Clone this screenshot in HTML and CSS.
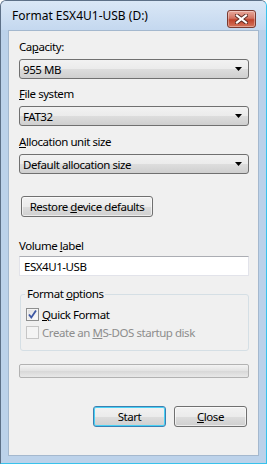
FILE: index.html
```html
<!DOCTYPE html>
<html lang="en">
<head>
    <meta charset="UTF-8">
    <title>Format ESX4U1-USB (D:)</title>
    <link rel="stylesheet" href="styles.css">
</head>
<body>
    <div class="window">
        <div class="titlebar">
            <span class="title">Format ESX4U1-USB (D:)</span>
            <div class="close-btn">
                <svg width="13" height="10" viewBox="0 0 13 10">
                    <path d="M2 1.5 L11 8.5 M11 1.5 L2 8.5" stroke="#5a2a22" stroke-width="4" stroke-linecap="square" />
                    <path d="M2 1.5 L11 8.5 M11 1.5 L2 8.5" stroke="#ffffff" stroke-width="2.2" stroke-linecap="square" />
                </svg>
            </div>
        </div>

        <div class="client">
            <div class="label">Ca<u>p</u>acity:</div>
            <div class="combo">
                <span>955 MB</span>
                <svg width="7" height="4" viewBox="0 0 7 4"><path d="M0 0 H7 L3.5 4 Z" fill="#000" /></svg>
            </div>

            <div class="label"><u>F</u>ile system</div>
            <div class="combo">
                <span>FAT32</span>
                <svg width="7" height="4" viewBox="0 0 7 4"><path d="M0 0 H7 L3.5 4 Z" fill="#000" /></svg>
            </div>

            <div class="label alloc"><u>A</u>llocation unit size</div>
            <div class="combo">
                <span>Default allocation size</span>
                <svg width="7" height="4" viewBox="0 0 7 4"><path d="M0 0 H7 L3.5 4 Z" fill="#000" /></svg>
            </div>

            <div class="btn restore"><span>Restore <u>d</u>evice defaults</span></div>

            <div class="label volume">Volume <u>l</u>abel</div>
            <div class="textbox">ESX4U1-USB</div>

            <div class="group">
                <span class="group-title">Format <u>o</u>ptions</span>
                <div class="check-row">
                    <span class="checkbox checked">
                        <svg width="11" height="11" viewBox="0 0 11 11">
                            <path d="M2 5.5 L4.3 8.5 L9 1.5" fill="none" stroke="#3d57a3" stroke-width="1.8" />
                        </svg>
                    </span>
                    <span><u>Q</u>uick Format</span>
                </div>
                <div class="check-row disabled">
                    <span class="checkbox"></span>
                    <span>Create an <u>M</u>S-DOS startup disk</span>
                </div>
            </div>

            <div class="progress"></div>

            <div class="actions">
                <div class="btn default"><span>Start</span></div>
                <div class="btn"><span><u>C</u>lose</span></div>
            </div>
        </div>
    </div>
</body>
</html>
```

FILE: styles.css
```css
* {
    box-sizing: border-box;
}

body {
    margin: 0;
    background: #ffffff;
    font-family: "Noto Sans", sans-serif;
    font-size: 11.5px;
    letter-spacing: -0.45px;
    color: #000;
}

u {
    text-decoration-thickness: 1px;
    text-underline-offset: 1px;
}

.window {
    width: 267px;
    height: 464px;
    background: #bcd2ea;
    border: 1px solid #5d7087;
    border-right-color: #38c2ec;
    border-bottom-color: #38c2ec;
    border-radius: 6px 6px 0 0;
    display: flex;
    flex-direction: column;
}

.titlebar {
    height: 29px;
    flex-shrink: 0;
    display: flex;
    justify-content: space-between;
    align-items: flex-start;
    padding-left: 11px;
    background: linear-gradient(#dae7f6, #c4d8ef);
    border-radius: 5px 5px 0 0;
}

.title {
    margin-top: 7px;
    font-size: 12px;
    line-height: 16px;
    letter-spacing: 0;
}

.close-btn {
    width: 29px;
    height: 18px;
    margin-top: 9px;
    margin-right: 10px;
    border: 1px solid #7a3a30;
    border-radius: 3px;
    background: linear-gradient(#e9a99c, #d27462 45%, #c0432c 55%, #d5745c);
    box-shadow: inset 0 0 0 1px rgba(255, 255, 255, 0.35);
    display: flex;
    align-items: center;
    justify-content: center;
}

.client {
    height: 426px;
    margin: 0 7px;
    background: #f0f0f0;
    border: 1px solid #a4b8ce;
    padding: 1px 9px 0 10px;
    display: flex;
    flex-direction: column;
}

.label {
    line-height: 15px;
    margin-top: 7px;
}

.label.alloc {
    margin-top: 8px;
}

.combo {
    height: 20px;
    margin-top: 5px;
    border: 1px solid #707070;
    border-radius: 3px;
    background: linear-gradient(#f2f2f2, #ebebeb 50%, #dddddd 51%, #cfcfcf);
    display: flex;
    align-items: center;
    justify-content: space-between;
    padding: 0 6px 0 3px;
}

.btn {
    height: 21px;
    border: 1px solid #707070;
    border-radius: 3px;
    background: linear-gradient(#f2f2f2, #ebebeb 50%, #dddddd 51%, #cfcfcf);
    box-shadow: inset 0 0 0 1px rgba(255, 255, 255, 0.6);
    display: flex;
    align-items: center;
    justify-content: center;
    line-height: 15px;
}

.restore {
    width: 132px;
    margin: 22px 0 0 2px;
}

.label.volume {
    margin-top: 21px;
}

.textbox {
    height: 20px;
    margin-top: 3px;
    background: #fff;
    border: 1px solid #e2e3ea;
    border-top-color: #abadb3;
    padding-left: 4px;
    display: flex;
    align-items: center;
}

.group {
    position: relative;
    height: 57px;
    margin: 18px 0 0 1px;
    border: 1px solid #d5dfe5;
    border-radius: 3px;
    padding: 13px 0 0 5px;
    display: flex;
    flex-direction: column;
    gap: 5px;
}

.group-title {
    position: absolute;
    top: -9px;
    left: 4px;
    padding: 0 2px;
    background: #f0f0f0;
    line-height: 15px;
}

.check-row {
    height: 13px;
    display: flex;
    align-items: center;
    gap: 3px;
}

.checkbox {
    width: 13px;
    height: 13px;
    border: 1px solid #8e8f8f;
    background: linear-gradient(135deg, #dcdcdc, #ffffff);
    box-shadow: inset 0 0 0 1px #f4f4f4;
    display: flex;
    align-items: center;
    justify-content: center;
}

.check-row.disabled {
    color: #8d8d8d;
}

.check-row.disabled .checkbox {
    border-color: #c6c6c6;
    background: #f4f4f4;
}

.progress {
    height: 14px;
    margin-top: 13px;
    border: 1px solid #b2b2b2;
    border-radius: 2px;
    background: linear-gradient(#f3f3f3, #e2e2e2 50%, #d8d8d8 51%, #e8e8e8);
}

.actions {
    display: flex;
    justify-content: flex-end;
    gap: 8px;
    margin: 28px 2px 0 0;
}

.actions .btn {
    width: 73px;
}

.btn.default {
    border-color: #3c7fb1;
    box-shadow: inset 0 0 0 1px #48d1f5;
}
```
